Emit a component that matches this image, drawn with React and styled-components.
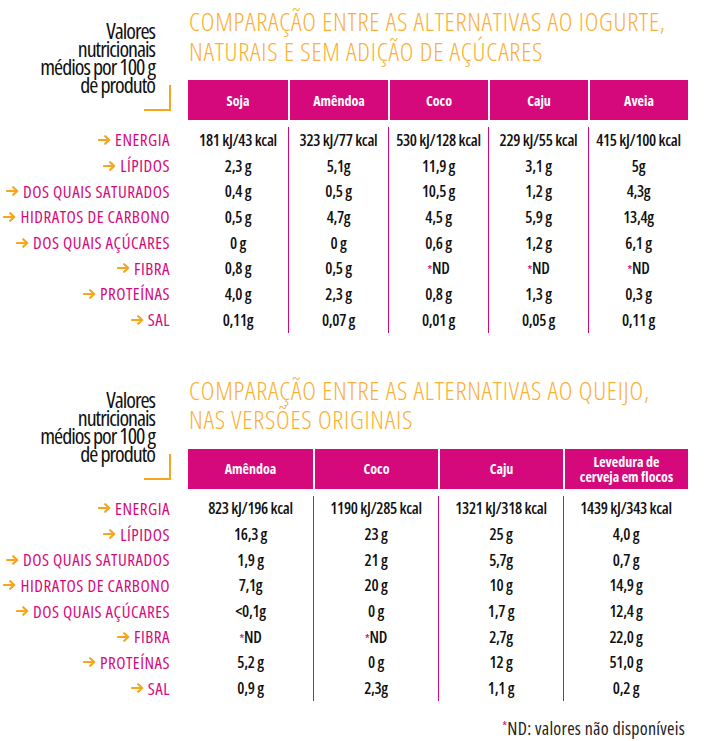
import React from 'react';
import styled, { createGlobalStyle } from 'styled-components';

const PINK = '#d6097c';
const ORANGE = '#f7a51c';
const TITLE = '#fbb034';
const FONT = '"Open Sans", "Roboto Condensed", sans-serif';

const GlobalStyle = createGlobalStyle`
  html, body {
    margin: 0;
    padding: 0;
    background: #ffffff;
  }
  body {
    font-family: ${FONT};
    font-stretch: 75%;
    color: #111;
  }
`;

const LABELS = [
  'ENERGIA',
  'LÍPIDOS',
  'DOS QUAIS SATURADOS',
  'HIDRATOS DE CARBONO',
  'DOS QUAIS AÇÚCARES',
  'FIBRA',
  'PROTEÍNAS',
  'SAL',
];

const yogurt = {
  title: ['COMPARAÇÃO ENTRE AS ALTERNATIVAS AO IOGURTE,', 'NATURAIS E SEM ADIÇÃO DE AÇÚCARES'],
  colWidth: 100,
  columns: ['Soja', 'Amêndoa', 'Coco', 'Caju', 'Aveia'],
  rows: [
    ['181 kJ/43 kcal', '323 kJ/77 kcal', '530 kJ/128 kcal', '229 kJ/55 kcal', '415 kJ/100 kcal'],
    ['2,3 g', '5,1g', '11,9 g', '3,1 g', '5g'],
    ['0,4 g', '0,5 g', '10,5 g', '1,2 g', '4,3g'],
    ['0,5 g', '4,7g', '4,5 g', '5,9 g', '13,4g'],
    ['0 g', '0 g', '0,6 g', '1,2 g', '6,1 g'],
    ['0,8 g', '0,5 g', '*ND', '*ND', '*ND'],
    ['4,0 g', '2,3 g', '0,8 g', '1,3 g', '0,3 g'],
    ['0,11g', '0,07 g', '0,01 g', '0,05 g', '0,11 g'],
  ],
};

const cheese = {
  title: ['COMPARAÇÃO ENTRE AS ALTERNATIVAS AO QUEIJO,', 'NAS VERSÕES ORIGINAIS'],
  colWidth: 125,
  columns: ['Amêndoa', 'Coco', 'Caju', 'Levedura de\ncerveja em flocos'],
  rows: [
    ['823 kJ/196 kcal', '1190 kJ/285 kcal', '1321 kJ/318 kcal', '1439 kJ/343 kcal'],
    ['16,3 g', '23 g', '25 g', '4,0 g'],
    ['1,9 g', '21 g', '5,7g', '0,7 g'],
    ['7,1g', '20 g', '10 g', '14,9 g'],
    ['<0,1g', '0 g', '1,7 g', '12,4 g'],
    ['*ND', '*ND', '2,7g', '22,0 g'],
    ['5,2 g', '0 g', '12 g', '51,0 g'],
    ['0,9 g', '2,3g', '1,1 g', '0,2 g'],
  ],
};

function Arrow() {
  return (
    <ArrowIcon viewBox="0 0 13 10" width="13" height="10">
      <path d="M1 5 H11 M7.2 1.2 L11.2 5 L7.2 8.8" />
    </ArrowIcon>
  );
}

function Value({ text }) {
  if (text.startsWith('*')) {
    return (
      <>
        <Star>*</Star>
        {text.slice(1)}
      </>
    );
  }
  return text;
}

function NutritionTable({ data }) {
  return (
    <Section>
      <Intro>
        <IntroText>
          Valores
          <br />
          nutricionais
          <br />
          médios por 100 g
          <br />
          de produto
        </IntroText>
        <Bracket />
      </Intro>
      <Head>
        <Title>
          {data.title[0]}
          <br />
          {data.title[1]}
        </Title>
        <HeaderRow>
          {data.columns.map((c) => (
            <HeaderCell key={c} $w={data.colWidth}>
              {c}
            </HeaderCell>
          ))}
        </HeaderRow>
      </Head>
      <Labels>
        {LABELS.map((l) => (
          <Label key={l}>
            <Arrow />
            {l}
          </Label>
        ))}
      </Labels>
      <Body>
        {data.columns.map((c, ci) => (
          <Column key={c} $w={data.colWidth} $first={ci === 0}>
            {data.rows.map((r, ri) => (
              <Cell key={ri}>
                <Value text={r[ci]} />
              </Cell>
            ))}
          </Column>
        ))}
      </Body>
    </Section>
  );
}

export default function App() {
  return (
    <Page>
      <GlobalStyle />
      <NutritionTable data={yogurt} />
      <NutritionTable data={cheese} />
      <Footnote>
        <Star>*</Star>
        ND: valores não disponíveis
      </Footnote>
    </Page>
  );
}

const Page = styled.div`
  width: 709px;
  padding-top: 7px;
`;

const Section = styled.div`
  display: grid;
  grid-template-columns: 188px 500px;
  grid-template-rows: auto auto;
  & + & {
    margin-top: 43px;
  }
`;

const Intro = styled.div`
  display: flex;
  flex-direction: column;
  align-items: flex-end;
  padding-right: 17px;
  padding-top: 14px;
`;

const IntroText = styled.div`
  font-size: 22px;
  font-weight: 450;
  line-height: 18px;
  letter-spacing: -1px;
  text-align: right;
  color: #111;
  margin-right: 16px;
`;

const Bracket = styled.div`
  width: 25px;
  height: 24px;
  margin-top: -8px;
  border-right: 2px solid ${ORANGE};
  border-bottom: 2px solid ${ORANGE};
`;

const Head = styled.div`
  display: flex;
  flex-direction: column;
`;

const Title = styled.div`
  font-size: 26px;
  font-weight: 330;
  line-height: 29.5px;
  letter-spacing: 0.72px;
  color: ${TITLE};
  margin-left: 1px;
  white-space: nowrap;
`;

const HeaderRow = styled.div`
  display: flex;
  margin-top: 14px;
  height: 40px;
`;

const HeaderCell = styled.div`
  width: ${(p) => p.$w}px;
  box-sizing: border-box;
  display: flex;
  align-items: center;
  justify-content: center;
  text-align: center;
  white-space: pre-line;
  background: ${PINK};
  color: #fff;
  font-stretch: 87.5%;
  font-weight: 700;
  font-size: 14px;
  line-height: 15px;
  & + & {
    border-left: 2px solid #fff;
  }
`;

const Labels = styled.div`
  display: flex;
  flex-direction: column;
  align-items: flex-end;
  padding-right: 18px;
  margin-top: 7px;
`;

const Label = styled.div`
  height: 25.7px;
  display: flex;
  align-items: center;
  gap: 4px;
  font-size: 17px;
  letter-spacing: 0.5px;
  color: ${PINK};
  white-space: nowrap;
`;

const ArrowIcon = styled.svg`
  fill: none;
  stroke: ${ORANGE};
  stroke-width: 2.2;
  stroke-linecap: round;
  stroke-linejoin: round;
`;

const Body = styled.div`
  display: flex;
  margin-top: 7px;
`;

const Column = styled.div`
  width: ${(p) => p.$w}px;
  box-sizing: border-box;
  display: flex;
  flex-direction: column;
  border-left: ${(p) => (p.$first ? 'none' : `1px solid ${PINK}`)};
`;

const Cell = styled.div`
  height: 25.7px;
  display: flex;
  align-items: center;
  justify-content: center;
  font-size: 16px;
  font-weight: 600;
  letter-spacing: -0.3px;
  color: #111;
  white-space: nowrap;
`;

const Star = styled.span`
  color: ${PINK};
  font-size: 0.7em;
  align-self: flex-start;
  margin-top: 6px;
  vertical-align: 0.35em;
`;

const Footnote = styled.div`
  width: 685px;
  text-align: right;
  margin-top: 15px;
  font-size: 18px;
  font-weight: 400;
  letter-spacing: 0.25px;
  color: #222;
`;
